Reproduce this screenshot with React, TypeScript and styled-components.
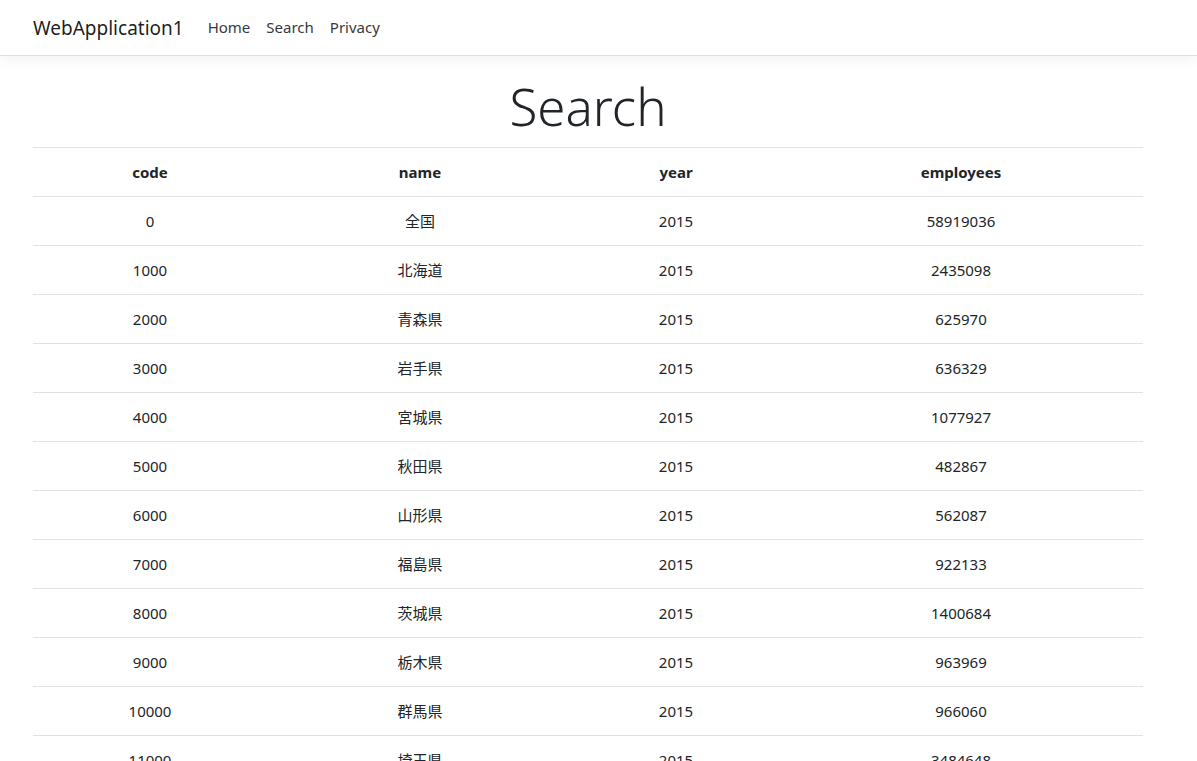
import styled, { createGlobalStyle } from "styled-components";

const GlobalStyle = createGlobalStyle`
  html, body {
    margin: 0;
    padding: 0;
    background: #fff;
  }
  body {
    font-family: "Noto Sans", "Open Sans", "Noto Sans CJK JP", sans-serif;
    font-size: 16px;
    line-height: 1.5;
    color: #212529;
  }
  * {
    box-sizing: border-box;
  }
`

const Header = styled.header`
  background: #fff;
  border-bottom: 1px solid #dee2e6;
  box-shadow: 0 4px 12px rgba(0, 0, 0, 0.05);
  margin-bottom: 16px;
`

const NavInner = styled.nav`
  width: 1140px;
  margin-left: 18px;
  padding: 8px 15px;
  display: flex;
  align-items: center;
  height: 55px;
`

const Brand = styled.a`
  font-size: 19px;
  line-height: 30px;
  color: rgba(0, 0, 0, 0.9);
  margin-right: 16px;
  text-decoration: none;
`

const NavList = styled.ul`
  display: flex;
  list-style: none;
  margin: 0;
  padding: 0;
`

const NavLink = styled.a`
  display: block;
  padding: 8px;
  font-size: 15px;
  color: #343a40;
  text-decoration: none;
`

const Main = styled.main`
  width: 1140px;
  margin-left: 18px;
  padding: 0 15px 16px;
`

const Title = styled.h1`
  font-size: 51px;
  font-weight: 300;
  line-height: 69px;
  height: 67px;
  text-align: center;
  margin: 0 0 8px;
`

const Table = styled.table`
  width: 100%;
  border-collapse: collapse;
  table-layout: fixed;
`

const Cell = styled.td<{ $w?: number }>`
  padding: 12px;
  border-top: 1px solid #dee2e6;
  text-align: center;
  font-size: 15px;
  line-height: 24px;
  vertical-align: top;
  ${p => (p.$w ? `width: ${p.$w}px;` : "")}
`

const HeadCell = styled(Cell).attrs({ as: "th" })`
  font-weight: 700;
  border-bottom: 1px solid #dee2e6;
`

const columns = [
  { key: "code", w: 234 },
  { key: "name", w: 306 },
  { key: "year", w: 206 },
  { key: "employees", w: 364 },
];

const rows: [number, string, number, number][] = [
  [0, "全国", 2015, 58919036],
  [1000, "北海道", 2015, 2435098],
  [2000, "青森県", 2015, 625970],
  [3000, "岩手県", 2015, 636329],
  [4000, "宮城県", 2015, 1077927],
  [5000, "秋田県", 2015, 482867],
  [6000, "山形県", 2015, 562087],
  [7000, "福島県", 2015, 922133],
  [8000, "茨城県", 2015, 1400684],
  [9000, "栃木県", 2015, 963969],
  [10000, "群馬県", 2015, 966060],
  [11000, "埼玉県", 2015, 3484648],
];

export default function App() {
  return (
    <>
      <GlobalStyle />
      <Header>
        <NavInner>
          <Brand href="#">WebApplication1</Brand>
          <NavList>
            <li><NavLink href="#">Home</NavLink></li>
            <li><NavLink href="#">Search</NavLink></li>
            <li><NavLink href="#">Privacy</NavLink></li>
          </NavList>
        </NavInner>
      </Header>
      <Main>
        <Title>Search</Title>
        <Table>
          <thead>
            <tr>
              {columns.map(c => (
                <HeadCell key={c.key} $w={c.w}>{c.key}</HeadCell>
              ))}
            </tr>
          </thead>
          <tbody>
            {rows.map(r => (
              <tr key={r[0]}>
                {r.map((v, i) => (
                  <Cell key={i}>{v}</Cell>
                ))}
              </tr>
            ))}
          </tbody>
        </Table>
      </Main>
    </>
  );
}
